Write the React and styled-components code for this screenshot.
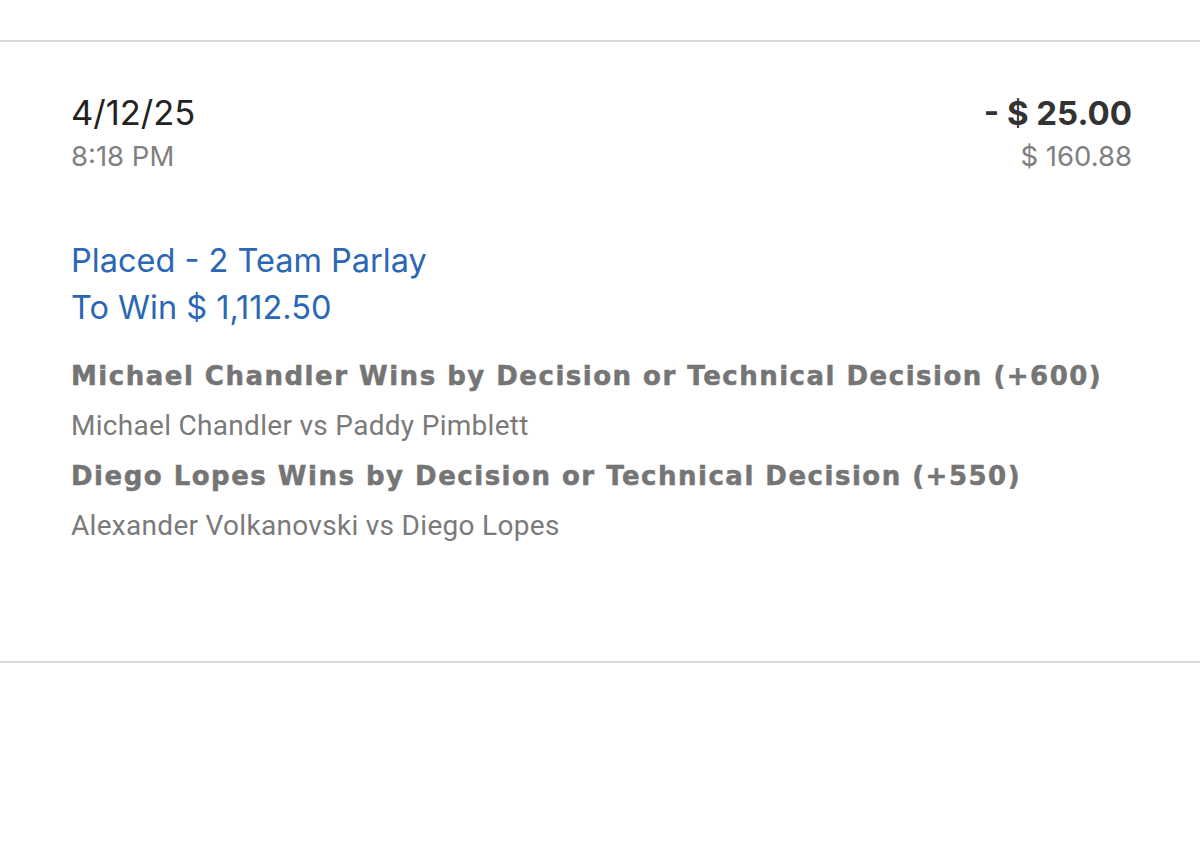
import React from "react";
import styled, { createGlobalStyle } from "styled-components";

const GlobalStyle = createGlobalStyle`
  body {
    margin: 0;
    background: #ffffff;
    font-family: Inter, "Noto Sans", sans-serif;
  }
`;

const Page = styled.div`
  padding-top: 40px;
  height: 849px;
  box-sizing: border-box;
`;

const Card = styled.section`
  border-top: 2px solid #d8d8d8;
  border-bottom: 2px solid #d8d8d8;
  height: 623px;
  box-sizing: border-box;
  padding: 51px 68px 0 71px;
`;

const Header = styled.div`
  display: flex;
  justify-content: space-between;
  align-items: flex-start;
`;

const Stack = styled.div`
  display: flex;
  flex-direction: column;
  align-items: ${(p) => (p.$right ? "flex-end" : "flex-start")};
`;

const DateText = styled.div`
  font-size: 34.5px;
  line-height: 40px;
  color: #222222;
`;

const Amount = styled.div`
  font-size: 33px;
  line-height: 40px;
  font-weight: 700;
  color: #333333;
`;

const SubText = styled.div`
  font-size: 27.5px;
  line-height: 40px;
  color: #808080;
  margin-top: 3px;
`;

const Status = styled.div`
  margin-top: 61px;
  display: flex;
  flex-direction: column;
`;

const BlueLine = styled.div`
  font-size: 32.5px;
  line-height: 47px;
  color: #2b67b4;
`;

const Legs = styled.div`
  margin-top: 20px;
  display: flex;
  flex-direction: column;
`;

const Pick = styled.div`
  font-family: "DejaVu Sans", "Liberation Sans", sans-serif;
  font-weight: 700;
  font-size: 26px;
  line-height: 50px;
  letter-spacing: 1.5px;
  color: #757575;
  -webkit-text-stroke: 0.5px #757575;
`;

const Matchup = styled.div`
  font-family: Roboto, "Liberation Sans", sans-serif;
  font-weight: 400;
  font-size: 28px;
  line-height: 50px;
  letter-spacing: 0.3px;
  color: #7a7a7a;
`;

const legs = [
  {
    pick: "Michael Chandler Wins by Decision or Technical Decision (+600)",
    matchup: "Michael Chandler vs Paddy Pimblett",
  },
  {
    pick: "Diego Lopes Wins by Decision or Technical Decision (+550)",
    matchup: "Alexander Volkanovski vs Diego Lopes",
  },
];

export default function App() {
  return (
    <>
      <GlobalStyle />
      <Page>
        <Card>
          <Header>
            <Stack>
              <DateText>4/12/25</DateText>
              <SubText>8:18 PM</SubText>
            </Stack>
            <Stack $right>
              <Amount>- $ 25.00</Amount>
              <SubText>$ 160.88</SubText>
            </Stack>
          </Header>
          <Status>
            <BlueLine>Placed - 2 Team Parlay</BlueLine>
            <BlueLine>To Win $ 1,112.50</BlueLine>
          </Status>
          <Legs>
            {legs.map((leg) => (
              <React.Fragment key={leg.pick}>
                <Pick>{leg.pick}</Pick>
                <Matchup>{leg.matchup}</Matchup>
              </React.Fragment>
            ))}
          </Legs>
        </Card>
      </Page>
    </>
  );
}
